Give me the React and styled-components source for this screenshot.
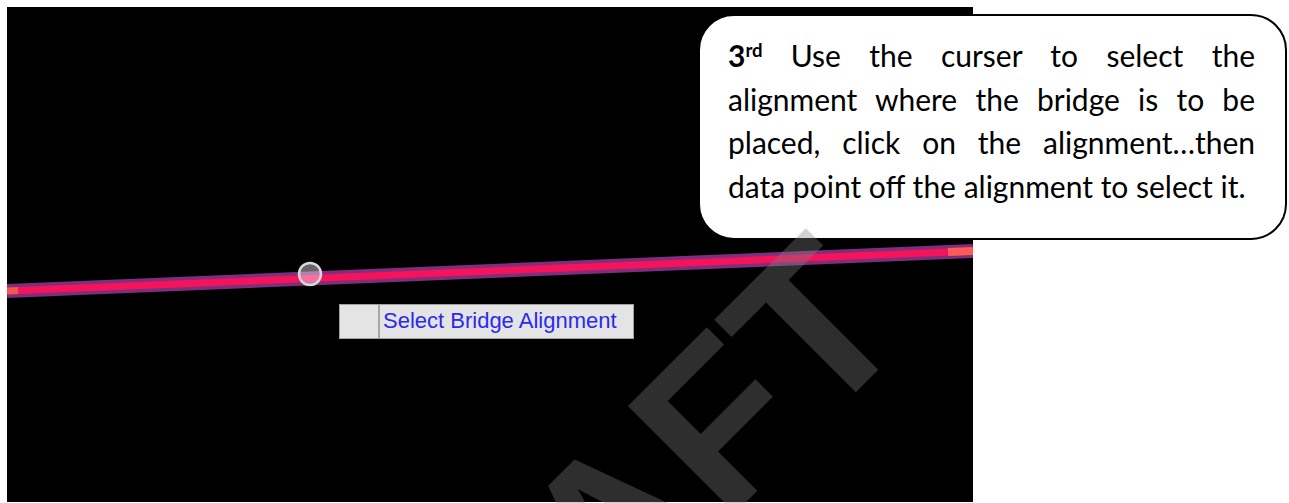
import React from "react";
import styled, { createGlobalStyle } from "styled-components";

const GlobalStyle = createGlobalStyle`
  html, body {
    margin: 0;
    padding: 0;
    background: #ffffff;
    overflow: hidden;
  }
`;

const Page = styled.div`
  position: relative;
  width: 1289px;
  height: 503px;
  overflow: hidden;
  box-sizing: border-box;
  padding: 7px 0 0 7px;
  background: #ffffff;
`;

const Viewport = styled.div`
  position: relative;
  width: 966px;
  height: 495px;
  background: #000000;
`;

const Drawing = styled.svg`
  display: block;
  width: 966px;
  height: 495px;
`;

const Tooltip = styled.div`
  position: absolute;
  left: 332px;
  top: 297px;
  height: 35px;
  display: flex;
  align-items: stretch;
  box-sizing: border-box;
  border: 1px solid #a2a2a2;
  background: #e4e4e4;
`;

const TipIcon = styled.div`
  width: 38px;
  border-right: 2px solid #a8a8a8;
`;

const TipLabel = styled.div`
  padding: 0 16px 0 3px;
  font-family: "Liberation Sans", Arial, sans-serif;
  font-size: 22px;
  line-height: 32px;
  color: #2a2af0;
  white-space: nowrap;
`;

const Callout = styled.div`
  position: absolute;
  left: 698px;
  top: 14px;
  width: 589px;
  height: 226px;
  box-sizing: border-box;
  border: 2px solid #000000;
  border-radius: 36px;
  background: #ffffff;
  padding: 18px 30px 0 28px;
  font-family: Lato, "Open Sans", sans-serif;
  font-size: 30px;
  line-height: 43.5px;
  color: #000000;
`;

const Line = styled.div`
  text-align: justify;
  text-align-last: ${(p) => (p.$last ? "left" : "justify")};
`;

const Step = styled.b`
  font-weight: 700;
`;

const Sup = styled.span`
  font-size: 0.62em;
  line-height: 0;
  position: relative;
  top: -0.55em;
`;

const Watermark = styled.div`
  position: absolute;
  left: 256px;
  top: 729px;
  transform-origin: 0 0;
  transform: rotate(-45deg);
  font-family: "Liberation Sans", Arial, sans-serif;
  font-weight: 700;
  font-size: 220px;
  line-height: 1;
  white-space: nowrap;
  color: rgba(128, 128, 128, 0.36);
  pointer-events: none;
  z-index: 5;
`;

const lines = [
  "Use the curser to select the",
  "alignment where the bridge is to be",
  "placed, click on the alignment\u2026then",
  "data point off the alignment to select it.",
];

export default function App() {
  return (
    <>
      <GlobalStyle />
      <Page>
        <Viewport>
          <Drawing viewBox="0 0 966 495">
            <line x1="0" y1="284" x2="966" y2="244" stroke="#7d2f7c" strokeWidth="14" />
            <line x1="0" y1="284" x2="966" y2="244" stroke="#f5135c" strokeWidth="7" />
            <line x1="0" y1="284" x2="11" y2="283.5" stroke="#f3574f" strokeWidth="7" />
            <line x1="941" y1="245" x2="966" y2="244" stroke="#ff5a55" strokeWidth="8" />
            <circle cx="303" cy="267" r="11" fill="rgba(255,255,255,0.4)" stroke="#d8d8d8" strokeWidth="2.5" />
          </Drawing>
          <Tooltip>
            <TipIcon />
            <TipLabel>Select Bridge Alignment</TipLabel>
          </Tooltip>
        </Viewport>

        <Callout>
          {lines.map((text, i) => (
            <Line key={i} $last={i === lines.length - 1}>
              {i === 0 && (
                <Step>
                  3<Sup>rd</Sup>{" "}
                </Step>
              )}
              {text}
            </Line>
          ))}
        </Callout>

        <Watermark>DRAFT</Watermark>
      </Page>
    </>
  );
}
